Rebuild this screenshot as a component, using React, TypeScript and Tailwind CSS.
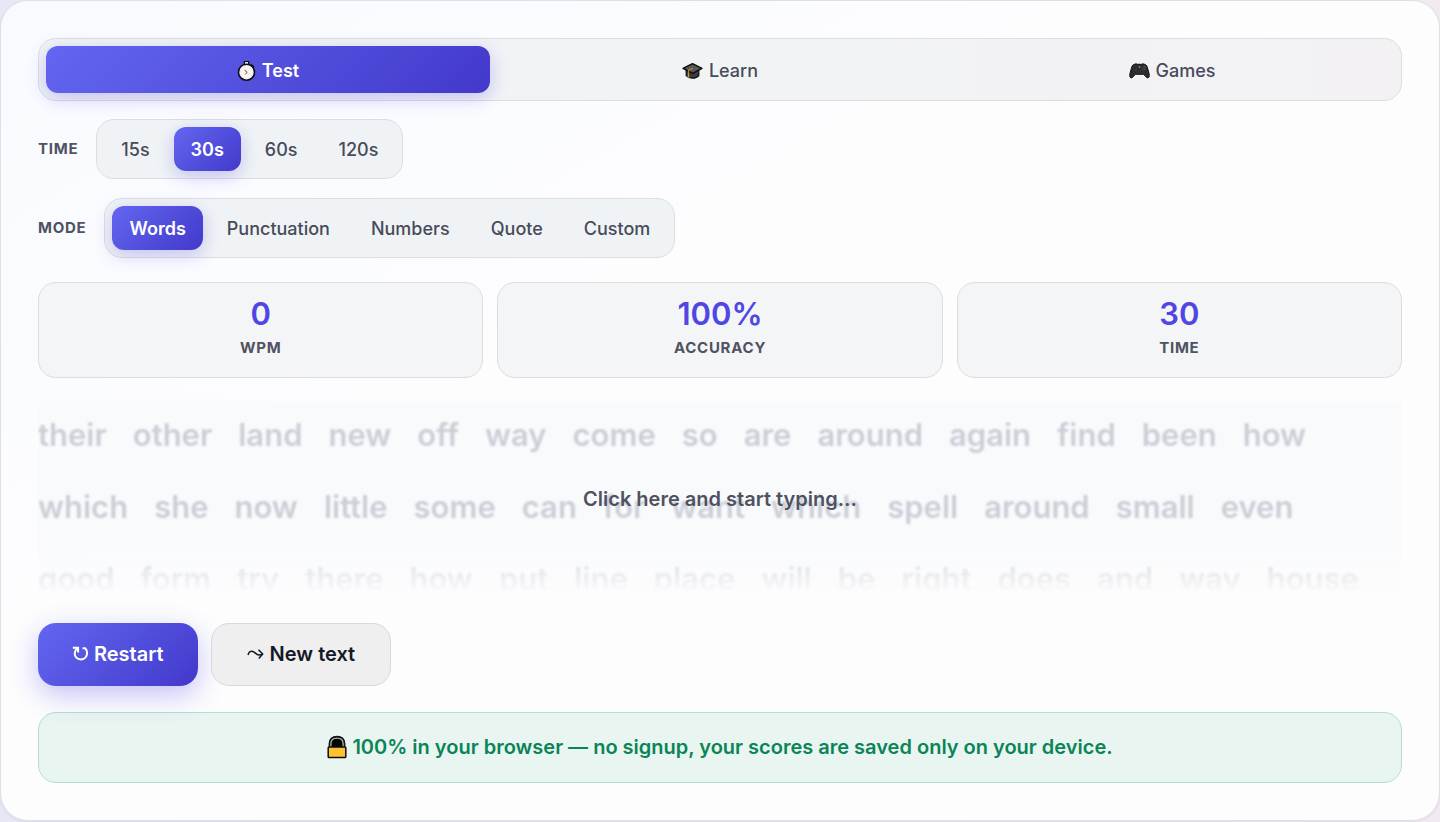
import { useState } from "react";

const rows: string[] = [
  "their other land new off way come so are around again find been how",
  "which she now little some can for want which spell around small even",
  "good form try there how put line place will be right does and way house",
];

const active =
  "bg-linear-135 from-[#6366f1] to-[#4338ca] font-semibold text-white shadow-[0_5px_18px_rgba(79,70,229,0.28)]";
const idle = "font-medium text-[#474b5a]";

function Stopwatch() {
  return (
    <svg width="19" height="22" viewBox="0 0 19 22" aria-hidden="true">
      <path d="M6.700 1h5.600v3.500H6.700z" fill="#111" />
      <path d="M8 2h3v3H8z" fill="#dfe5d8" />
      <path d="M14 3.800l3.400 2.400-1.300 2.400L12.500 6z" fill="#111" />
      <circle cx="9.500" cy="12.200" r="8" fill="#f7f6f0" stroke="#0b0d14" strokeWidth="1.600" />
      <circle cx="9.500" cy="12.200" r="5.800" fill="none" stroke="#d0d0ca" strokeWidth="0.700" strokeDasharray="0.7 2.3" />
      <path d="M7.700 9.800l2.500 2.800" fill="none" stroke="#c9574f" strokeWidth="1.100" />
      <path d="M10.200 12.600l-2.300 1.800" fill="none" stroke="#666" strokeWidth="0.900" />
    </svg>
  );
}

function Cap() {
  return (
    <svg width="21" height="18" viewBox="0 0 21 18" aria-hidden="true">
      <path d="M4.200 8v5.600c1.500 1.700 3.800 2.600 6.300 2.600 2.600 0 4.900-.9 6.300-2.600V8z" fill="#3b3c40" stroke="#0c0c0e" strokeWidth="1.200" />
      <path d="M10.500 1.600L20 6.400l-9.300 5L1 6.400z" fill="#56575b" stroke="#0c0c0e" strokeWidth="1.300" strokeLinejoin="round" />
      <path d="M10.800 6.300L6.500 8.300v4.500" fill="none" stroke="#c98a16" strokeWidth="1.100" />
      <path d="M6.400 10.800l-1 4.700h2.100z" fill="#e0a11b" />
    </svg>
  );
}

function Gamepad() {
  return (
    <svg width="21" height="18" viewBox="0 0 21 18" aria-hidden="true">
      <path
        d="M5.800 2.200c1.100-.6 2.100-.3 2.800.1h3.800c.7-.4 1.700-.7 2.800-.1 1.700.3 2.500 1.200 3.100 3l1.800 6.600c.5 2.300 0 4-1.300 4.100-1.700.1-2.900-2.600-4.400-3.600H6.600c-1.500 1-2.700 3.700-4.400 3.600C.9 15.800.4 14.100.9 11.800l1.800-6.600c.6-1.800 1.400-2.700 3.100-3z"
        fill="#2b2c2e"
        stroke="#101113"
        strokeWidth="1"
      />
      <circle cx="5.700" cy="5.900" r="1.400" fill="#17181a" stroke="#505256" strokeWidth="0.500" />
      <circle cx="13" cy="9" r="1.300" fill="#17181a" stroke="#505256" strokeWidth="0.500" />
      <circle cx="8" cy="9" r="1.200" fill="#17181a" stroke="#505256" strokeWidth="0.500" />
      <circle cx="10.500" cy="5" r="0.800" fill="#b4b5b7" />
      <circle cx="15.300" cy="4.500" r="0.600" fill="#8b8a5b" />
      <circle cx="16.600" cy="5.900" r="0.600" fill="#7f4b4b" />
      <circle cx="14" cy="5.900" r="0.600" fill="#4c6688" />
      <circle cx="15.300" cy="7.200" r="0.600" fill="#507a56" />
    </svg>
  );
}

function Lock() {
  return (
    <svg width="20" height="24" viewBox="0 0 20 24" aria-hidden="true">
      <path d="M2.200 12.500V8.600C2.200 4.200 5.300 1.300 10 1.300s7.800 2.900 7.800 7.300v3.900z" fill="#050505" stroke="#111" strokeWidth="1.200" />
      <path d="M3.900 12V8.800C3.900 5.400 6.200 3.100 10 3.100s6.100 2.300 6.100 5.700V12" fill="none" stroke="#aeb5b4" strokeWidth="1.300" />
      <rect x="1.200" y="12" width="17.600" height="10.500" rx="0.800" fill="#fdc134" stroke="#0d0d0d" strokeWidth="1.500" />
    </svg>
  );
}

function RestartArrow() {
  return (
    <svg width="17" height="17" viewBox="0 0 17 17" fill="none" stroke="currentColor" strokeWidth="2" aria-hidden="true">
      <path d="M10.500 3.200h2.700c1.200 1.300 1.900 2.800 1.900 4.500 0 3.900-2.700 6.700-6.400 6.700-3.600 0-6-2.600-6-6 0-2 .8-3.700 2.300-5" />
      <path d="M.8 2.800h5.300v4.700" />
    </svg>
  );
}

function WaveArrow() {
  return (
    <svg width="17" height="12" viewBox="0 0 17 12" fill="none" stroke="currentColor" strokeWidth="1.500" aria-hidden="true">
      <path d="M1 7c.6-2.300 2-3.700 3.900-3.700C8 3.300 8.700 7 12 7c1.300 0 2.300-.3 3.300-.9" />
      <path d="M11.500 1.800L15.700 6l-3.900 4.600" />
    </svg>
  );
}

type ChoiceProps = { label: string; options: string[]; initial: string };

function Choice({ label, options, initial }: ChoiceProps) {
  const [value, setValue] = useState(initial);
  return (
    <div className="flex items-center gap-[18px]">
      <span className="text-[15px] font-bold tracking-wider text-[#4f5262]">{label}</span>
      <div
        role="group"
        aria-label={label}
        className="flex gap-[7px] rounded-[18px] border border-[#dcdde1] bg-[#f0f3f5] p-[7px]"
      >
        {options.map((o) => (
          <button
            key={o}
            type="button"
            aria-pressed={o === value}
            onClick={() => setValue(o)}
            className={`h-11 rounded-xl px-[17px] pt-px text-lg ${o === value ? active : idle}`}
          >
            {o}
          </button>
        ))}
      </div>
    </div>
  );
}

const tabs = [
  { name: "Test", icon: <Stopwatch /> },
  { name: "Learn", icon: <Cap /> },
  { name: "Games", icon: <Gamepad /> },
];

const stats = [
  { value: "0", name: "WPM" },
  { value: "100%", name: "ACCURACY" },
  { value: "30", name: "TIME" },
];

export default function App() {
  const [tab, setTab] = useState("Test");
  return (
    <div className="min-h-screen bg-linear-to-r from-[#e6e8f5] to-[#f1eaf1] pb-0.5 font-[Inter,sans-serif]">
      <main className="rounded-[28px] border border-[#dfe0e6] bg-linear-to-br from-[#f8faff] via-[#fdfdfe] via-40% to-[#fdfdfd] p-[37px] shadow-[0_1px_3px_rgba(30,30,60,0.08)]">
        <nav className="grid grid-cols-3 gap-2 rounded-[18px] border border-[#dcdde1] bg-linear-to-r from-[#f0f3f6] via-[#f1f3f5] to-[#f3f1f4] p-[7px]">
          {tabs.map((t) => (
            <button
              key={t.name}
              type="button"
              aria-pressed={t.name === tab}
              onClick={() => setTab(t.name)}
              className={`flex h-[47px] items-center justify-center gap-[6px] rounded-xl pt-[3px] text-lg ${t.name === tab ? active : idle}`}
            >
              {t.icon}
              <span>{t.name}</span>
            </button>
          ))}
        </nav>

        <div className="mt-[18px] flex flex-col gap-[19px]">
          <Choice label="TIME" options={["15s", "30s", "60s", "120s"]} initial="30s" />
          <Choice label="MODE" options={["Words", "Punctuation", "Numbers", "Quote", "Custom"]} initial="Words" />
        </div>

        <dl className="mt-6 grid grid-cols-3 gap-[14px]">
          {stats.map((s) => (
            <div
              key={s.name}
              className="flex h-24 flex-col-reverse items-center justify-center rounded-[18px] border border-[#dcdde1] bg-[#f4f5f7] pb-1"
            >
              <dt className="text-[15px] leading-7 font-bold tracking-wider text-[#4f5262]">{s.name}</dt>
              <dd className="text-[31px] leading-10 font-semibold text-[#4f46e5]">{s.value}</dd>
            </div>
          ))}
        </dl>

        <section className="relative mt-[21px] h-[198px]">
          <div className="h-full overflow-hidden mask-[linear-gradient(to_bottom,black_72%,transparent_99%)]">
            <div className="bg-linear-to-b from-transparent to-[#f9fafc] to-3% text-[31px] leading-[72px] font-semibold whitespace-nowrap text-[#cbced6] blur-[1px]">
              {rows.map((r) => (
                <p key={r} className="flex gap-[26px]">
                  {r.split(" ").map((w, i) => (
                    <span key={i}>{w}</span>
                  ))}
                </p>
              ))}
            </div>
          </div>
          <button
            type="button"
            className="absolute inset-0 flex items-center justify-center pt-0.5 text-xl font-semibold text-[#4f5262]"
          >
            Click here and start typing…
          </button>
        </section>

        <div className="mt-[26px] flex gap-[13px]">
          <button
            type="button"
            className="flex h-[63px] items-center gap-[5px] rounded-[18px] bg-linear-135 from-[#6366f1] to-[#4338ca] px-[34px] pb-0.5 text-xl font-semibold text-white shadow-[0_9px_28px_rgba(79,70,229,0.32)]"
          >
            <RestartArrow />
            <span>Restart</span>
          </button>
          <button
            type="button"
            className="flex h-[63px] items-center gap-[6px] rounded-[18px] border border-[#d8d9dc] bg-[#efeff0] px-[35px] pb-0.5 text-xl font-semibold text-[#151827]"
          >
            <WaveArrow />
            <span>New text</span>
          </button>
        </div>

        <p className="mt-[26px] flex h-[71px] items-center justify-center gap-[5px] rounded-[18px] border border-[#b5dfd1] bg-[#e8f5f1] pb-0.5 text-xl font-semibold text-[#0b8457]">
          <Lock />
          <span>100% in your browser — no signup, your scores are saved only on your device.</span>
        </p>
      </main>
    </div>
  );
}
